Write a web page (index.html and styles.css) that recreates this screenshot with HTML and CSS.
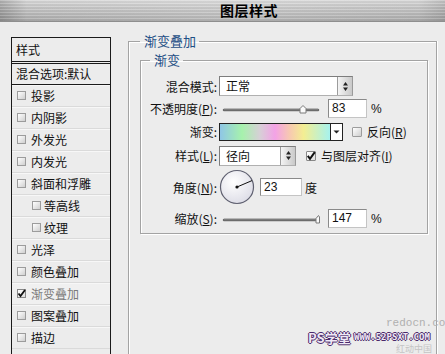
FILE: index.html
```html
<!DOCTYPE html>
<html lang="zh">
<head>
<meta charset="utf-8">
<title>图层样式</title>
<link rel="stylesheet" href="styles.css">
</head>
<body>
<div class="titlebar"><span class="title">图层样式</span></div>
<div class="main">
  <div class="list">
    <div class="hdr">样式</div>
    <div class="blend">混合选项:默认</div>
    <div class="item"><span class="cb"></span>投影</div>
    <div class="item"><span class="cb"></span>内阴影</div>
    <div class="item"><span class="cb"></span>外发光</div>
    <div class="item"><span class="cb"></span>内发光</div>
    <div class="item"><span class="cb"></span>斜面和浮雕</div>
    <div class="item sub"><span class="cb"></span>等高线</div>
    <div class="item sub"><span class="cb"></span>纹理</div>
    <div class="item"><span class="cb"></span>光泽</div>
    <div class="item"><span class="cb"></span>颜色叠加</div>
    <div class="item sel"><span class="cb on"><svg width="9" height="9" viewBox="0 0 9 9"><path d="M1.5 4.5 L3.5 7 L8 1" fill="none" stroke="#111" stroke-width="1.8"/></svg></span>渐变叠加</div>
    <div class="item"><span class="cb"></span>图案叠加</div>
    <div class="item"><span class="cb"></span>描边</div>
  </div>
  <fieldset class="outer">
    <legend>渐变叠加</legend>
    <fieldset class="inner">
      <legend>渐变</legend>
      <div class="row r1">
        <span class="lbl">混合模式:</span>
        <div class="select s1"><span class="val">正常</span><span class="spin"><svg width="7" height="11" viewBox="0 0 7 11"><path d="M3.5 1 L6 4.5 H1 Z M3.5 10 L6 6.5 H1 Z" fill="#222"/></svg></span></div>
      </div>
      <div class="row r2">
        <span class="lbl">不透明度(<u>P</u>):</span>
        <svg class="slider" width="98" height="12" viewBox="0 0 98 12"><path d="M2 7 H96" stroke="#6c6c6c" stroke-width="2.5" stroke-linecap="round"/><path d="M2 6 H96" stroke="#9a9a9a" stroke-width="0.8"/><path d="M78 10 V5.5 L81 2.5 L84 5.5 V10 Z" fill="#fafafa" stroke="#7a7a7a"/></svg>
        <span class="input i1">83</span><span class="unit">%</span>
      </div>
      <div class="row r3">
        <span class="lbl">渐变:</span>
        <span class="grad"></span><span class="garrow"><svg width="7" height="4" viewBox="0 0 7 4"><path d="M0.5 0.5 H6.5 L3.5 3.5 Z" fill="#222"/></svg></span>
        <span class="cb box chk1"></span><span class="ctext">反向(<u>R</u>)</span>
      </div>
      <div class="row r4">
        <span class="lbl">样式(<u>L</u>):</span>
        <div class="select s2"><span class="val">径向</span><span class="spin"><svg width="7" height="11" viewBox="0 0 7 11"><path d="M3.5 1 L6 4.5 H1 Z M3.5 10 L6 6.5 H1 Z" fill="#222"/></svg></span></div>
        <span class="cb box on chk2"><svg width="10" height="10" viewBox="0 0 10 10"><path d="M1.8 4.8 L4 7.8 L8.8 1.2" fill="none" stroke="#111" stroke-width="2"/></svg></span><span class="ctext">与图层对齐(<u>I</u>)</span>
      </div>
      <div class="row r5">
        <span class="lbl">角度(<u>N</u>):</span>
        <svg class="dial" width="36" height="36" viewBox="0 0 36 36"><defs><radialGradient id="dg" cx="40%" cy="35%" r="70%"><stop offset="0" stop-color="#ffffff"/><stop offset="1" stop-color="#dcdce6"/></radialGradient></defs><circle cx="18" cy="18" r="16.5" fill="url(#dg)" stroke="#5f6070" stroke-width="1.2"/><path d="M18 18 L33 11.6" stroke="#111" stroke-width="1"/><circle cx="18" cy="18" r="1.6" fill="#111"/></svg>
        <span class="input i2">23</span><span class="unit deg">度</span>
      </div>
      <div class="row r6">
        <span class="lbl">缩放(<u>S</u>):</span>
        <svg class="slider" width="98" height="12" viewBox="0 0 98 12"><path d="M2 7 H95" stroke="#6c6c6c" stroke-width="2.5" stroke-linecap="round"/><path d="M2 6 H95" stroke="#9a9a9a" stroke-width="0.8"/><path d="M94 10 V5.5 L96.5 2.5 L97.5 4 V10 Z" fill="#fafafa" stroke="#7a7a7a"/></svg>
        <span class="input i1">147</span><span class="unit">%</span>
      </div>
    </fieldset>
  </fieldset>
</div>
<div class="wm">
  <span class="wm-red">redocn.co</span>
  <span class="wm-red2">红动中国</span>
  <span class="wm-ps">PS学堂</span>
  <span class="wm-url">WWW.52PSXT.COM</span>
</div>
</body>
</html>
```
FILE: styles.css
```css
html, body {
  margin: 0;
  overflow: hidden;
}
body {
  width: 445px;
  height: 354px;
  position: relative;
  background: #ececec;
  font-family: "Noto Sans CJK SC", "Noto Sans", sans-serif;
  font-size: 12px;
  color: #111;
}
u { text-decoration: underline; text-underline-offset: 1px; }

.titlebar {
  height: 22px;
  box-sizing: border-box;
  border-bottom: 1px solid #8e8e8e;
  background:
    repeating-linear-gradient(180deg, rgba(255,255,255,0.18) 0 1px, rgba(0,0,0,0.04) 1px 3px),
    linear-gradient(90deg, rgba(0,0,0,0.18), rgba(0,0,0,0) 6%, rgba(255,255,255,0.12) 50%, rgba(0,0,0,0) 94%, rgba(0,0,0,0.1)),
    linear-gradient(#d8d8d8, #c2c2c2 45%, #aaaaaa);
  text-align: center;
  padding-left: 53px;
}
.title {
  font-weight: bold;
  font-size: 14px;
  line-height: 21px;
  color: #000;
  letter-spacing: 0.5px;
}

.main {
  display: flex;
  align-items: flex-start;
  padding-left: 11px;
  gap: 17px;
}

.list {
  margin-top: 15px;
  width: 100px;
  height: 317px;
  box-sizing: border-box;
  border: 1px solid #1a1a1a;
  border-bottom: none;
  background: #ececec;
  overflow: hidden;
}
.hdr {
  height: 23px;
  line-height: 23px;
  padding-left: 4px;
  border-bottom: 3px double #1a1a1a;
}
.blend {
  height: 20px;
  line-height: 20px;
  padding-left: 4px;
  border-bottom: 1px solid #1a1a1a;
}
.item {
  height: 21px;
  display: flex;
  align-items: center;
  gap: 5px;
  padding-left: 5px;
  border-bottom: 1px solid #dadada;
  box-shadow: inset 0 1px 0 #f7f7f7;
}
.item.sub { padding-left: 20px; gap: 3px; }
.item.sel { color: #7a7a7a; background: #f0f0f0; }

.cb {
  width: 9px;
  height: 9px;
  box-sizing: border-box;
  border: 1px solid #9c9c9c;
  background: linear-gradient(135deg, #ffffff, #cfcfcf);
  flex: none;
  display: flex;
  align-items: center;
  justify-content: center;
  overflow: visible;
}
.cb.on { background: linear-gradient(135deg, #ffffff, #dedede); border-color: #888; }
.cb svg { flex: none; }

.outer {
  margin: 11px 0 0 0;
  width: 309px;
  height: 321px;
  box-sizing: border-box;
  padding: 3px 8px 0 11px;
  border: 1px solid #a3a3a3;
  border-bottom: none;
  box-shadow: inset 1px 1px 0 #ffffff, 1px 0 0 #ffffff;
  min-inline-size: 0;
}
legend {
  color: #1f4f85;
  font-size: 13px;
  line-height: 16px;
  padding: 0 3px 0 4px;
}
.inner {
  margin: 0;
  padding: 7px 0 5px 3px;
  border: 1px solid #a3a3a3;
  box-shadow: inset 1px 1px 0 #ffffff, 1px 1px 0 #ffffff;
  min-inline-size: 0;
}
.inner legend { margin-left: 6px; }

.row {
  display: flex;
  align-items: center;
}
.lbl {
  width: 73px;
  flex: none;
  text-align: right;
  white-space: nowrap;
  margin-right: 2px;
}
.r1 { height: 22px; }
.r2 { height: 19px; margin-top: 2px; }
.r3 { height: 19px; margin-top: 4px; }
.r4 { height: 21px; margin-top: 4px; }
.r5 { height: 34px; margin-top: 4px; }
.r6 { height: 19px; margin-top: 5px; }

.select {
  height: 20px;
  box-sizing: border-box;
  display: flex;
  background: #fff;
  border: 1px solid #7d7d7d;
  border-right-color: #9a9a9a;
  border-bottom-color: #b0b0b0;
}
.s1 { width: 134px; }
.s2 { width: 77px; }
.select .val {
  flex: 1;
  padding-left: 6px;
  line-height: 18px;
}
.spin {
  width: 14px;
  flex: none;
  display: flex;
  align-items: center;
  justify-content: center;
  background: linear-gradient(90deg, #f4f4f4, #c9c9c9);
  border-left: 1px solid #9c9c9c;
}

.slider { margin-left: 3px; flex: none; }
.input {
  height: 19px;
  box-sizing: border-box;
  background: #fff;
  border: 1px solid #8a8a8a;
  border-right-color: #c4c4c4;
  border-bottom-color: #c4c4c4;
  font-family: "Liberation Sans", Arial, sans-serif;
  font-size: 12px;
  line-height: 17px;
  padding-left: 3px;
  flex: none;
}
.i1 { width: 39px; margin-left: 8px; }
.i2 { width: 42px; height: 18px; margin-left: 5px; line-height: 16px; }
.unit { margin-left: 4px; font-family: "Liberation Sans", Arial, sans-serif; }
.unit.deg { margin-left: 3px; font-family: "Noto Sans CJK SC", sans-serif; }

.grad {
  width: 111px;
  height: 18px;
  box-sizing: border-box;
  border: 1px solid #222;
  border-right: none;
  background: linear-gradient(90deg, #8fc6e6 0%, #a6f2ac 20%, #d6d0d6 36%, #f3a2e6 50%, #f7c8b2 63%, #f3ee92 76%, #a6f2ee 100%);
  flex: none;
}
.garrow {
  width: 13px;
  height: 18px;
  box-sizing: border-box;
  border: 1px solid #222;
  background: #fff;
  display: flex;
  align-items: center;
  justify-content: center;
  flex: none;
}
.cb.box { width: 10px; height: 10px; border-radius: 1px; }
.chk1 { margin-left: 9px; }
.chk2 { margin-left: 10px; }
.ctext { margin-left: 5px; white-space: nowrap; }

.dial { flex: none; }

.wm {
  position: absolute;
  left: 300px;
  top: 316px;
  width: 145px;
  height: 38px;
}
.wm span { position: absolute; white-space: nowrap; line-height: 11px; }
.wm-red {
  left: 86px;
  top: 2px;
  font-family: "Liberation Mono", monospace;
  font-size: 11px;
  color: #b0b0b0;
}
.wm .wm-red2 {
  left: 96px;
  top: 28px;
  font-size: 9px;
  line-height: 10px;
  color: #c4c4c4;
}
.wm .wm-ps {
  left: 8px;
  top: 15px;
  font-size: 13px;
  line-height: 14px;
  font-weight: bold;
  color: #efe8f6;
  text-shadow: 1px 0 #4a2a6a, -1px 0 #4a2a6a, 0 1px #4a2a6a, 0 -1px #4a2a6a;
}
.wm .wm-url {
  left: 54px;
  top: 16px;
  font-family: "DejaVu Sans Mono", monospace;
  font-size: 9px;
  line-height: 10px;
  font-weight: bold;
  color: #efe8f6;
  text-shadow: 1px 0 #4a2a6a, -1px 0 #4a2a6a, 0 1px #4a2a6a, 0 -1px #4a2a6a;
}
```
